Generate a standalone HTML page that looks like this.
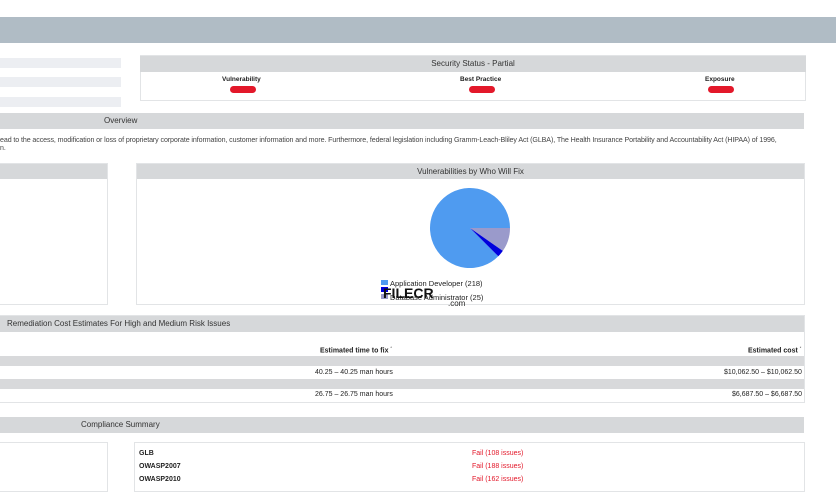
<!DOCTYPE html>
<html><head><style>
body{margin:0;width:836px;height:484px;background:#fff;position:relative;overflow:hidden;font-family:"Liberation Sans",sans-serif;color:#222}
.a{position:absolute}
.h{background:#d6d8da;font-size:8px;color:#333;text-align:center;line-height:16px}
.box{position:absolute;border:1px solid #e2e4e6;box-sizing:border-box}
.t{position:absolute;font-size:7px;white-space:nowrap}
b{font-weight:bold}
</style></head><body>
<div class="a" style="left:0;top:17px;width:836px;height:26px;background:#b0bcc5"></div>
<div class="a" style="left:0;top:58px;width:121px;height:10px;background:#eceef2"></div>
<div class="a" style="left:0;top:77px;width:121px;height:10px;background:#eceef2"></div>
<div class="a" style="left:0;top:97px;width:121px;height:10px;background:#eceef2"></div>

<div class="box" style="left:140px;top:55px;width:666px;height:46px"></div>
<div class="a h" style="left:140px;top:56px;width:666px;height:16px">Security Status - Partial</div>
<div class="t" style="left:222px;top:76px;font-size:6.5px"><b>Vulnerability</b></div>
<div class="t" style="left:460px;top:76px;font-size:6.5px"><b>Best Practice</b></div>
<div class="t" style="left:705px;top:76px;font-size:6.5px"><b>Exposure</b></div>
<div class="a" style="left:230px;top:86px;width:26px;height:7px;border-radius:4px;background:#e3182a"></div>
<div class="a" style="left:469px;top:86px;width:26px;height:7px;border-radius:4px;background:#e3182a"></div>
<div class="a" style="left:708px;top:86px;width:26px;height:7px;border-radius:4px;background:#e3182a"></div>

<div class="a h" style="left:0;top:113px;width:804px;height:16px;text-align:left;text-indent:104px">Overview</div>
<div class="t" style="left:0;top:136px;font-size:7.1px;color:#444;letter-spacing:-0.1px">ead to the access, modification or loss of proprietary corporate information, customer information and more. Furthermore, federal legislation including Gramm-Leach-Bliley Act (GLBA), The Health Insurance Portability and Accountability Act (HIPAA) of 1996,</div>
<div class="t" style="left:0;top:145px;font-size:7px;color:#444">n.</div>

<div class="box" style="left:-1px;top:163px;width:109px;height:142px"></div>
<div class="a h" style="left:0;top:164px;width:107px;height:15px"></div>
<div class="box" style="left:136px;top:163px;width:669px;height:142px"></div>
<div class="a h" style="left:137px;top:164px;width:667px;height:15px;line-height:15px">Vulnerabilities by Who Will Fix</div>
<svg class="a" style="left:0;top:0" width="836" height="484">
<path d="M470 228 L498.3 256.3 A40 40 0 1 1 510 228 Z" fill="#4f9bf0"/>
<path d="M470 228 L510 228 A40 40 0 0 1 502.8 250.9 Z" fill="#9a9acb"/>
<path d="M470 228 L502.8 250.9 A40 40 0 0 1 498.3 256.3 Z" fill="#0000dd"/>
<rect x="381" y="280" width="7" height="5" fill="#4f9bf0"/>
<rect x="381" y="287" width="7" height="5" fill="#0000dd"/>
<rect x="381" y="294" width="7" height="5" fill="#9a9acb"/>
</svg>
<div class="t" style="left:390px;top:279px;font-size:7.5px">Application Developer (218)</div>
<div class="t" style="left:390px;top:293px;font-size:7.5px">Database Administrator (25)</div>
<div class="t" style="left:383px;top:285px;font-size:14px;font-weight:bold;color:#111">FILECR</div>
<div class="t" style="left:448px;top:299px;font-size:8px">.com</div>

<div class="a h" style="left:0;top:315px;width:804px;height:17px;line-height:17px;text-align:left;text-indent:7px">Remediation Cost Estimates For High and Medium Risk Issues</div>
<div class="box" style="left:-1px;top:315px;width:806px;height:88px"></div>
<div class="t" style="left:320px;top:345px"><b>Estimated time to fix</b> <sup style="font-size:4px">*</sup></div>
<div class="t" style="left:748px;top:345px"><b>Estimated cost</b> <sup style="font-size:4px">*</sup></div>
<div class="a" style="left:0;top:356px;width:804px;height:10px;background:#d8d9db"></div>
<div class="t" style="left:315px;top:369px">40.25 – 40.25 man hours</div>
<div class="t" style="left:724px;top:369px">$10,062.50 – $10,062.50</div>
<div class="a" style="left:0;top:379px;width:804px;height:10px;background:#d8d9db"></div>
<div class="t" style="left:315px;top:391px">26.75 – 26.75 man hours</div>
<div class="t" style="left:732px;top:391px">$6,687.50 – $6,687.50</div>

<div class="a h" style="left:0;top:417px;width:804px;height:16px;text-align:left;text-indent:81px">Compliance Summary</div>
<div class="box" style="left:-1px;top:442px;width:109px;height:50px"></div>
<div class="box" style="left:134px;top:442px;width:671px;height:50px"></div>
<div class="t" style="left:139px;top:450px"><b>GLB</b></div>
<div class="t" style="left:139px;top:463px"><b>OWASP2007</b></div>
<div class="t" style="left:139px;top:476px"><b>OWASP2010</b></div>
<div class="t" style="left:472px;top:450px;color:#e3182a">Fail (108 issues)</div>
<div class="t" style="left:472px;top:463px;color:#e3182a">Fail (188 issues)</div>
<div class="t" style="left:472px;top:476px;color:#e3182a">Fail (162 issues)</div>
</body></html>
